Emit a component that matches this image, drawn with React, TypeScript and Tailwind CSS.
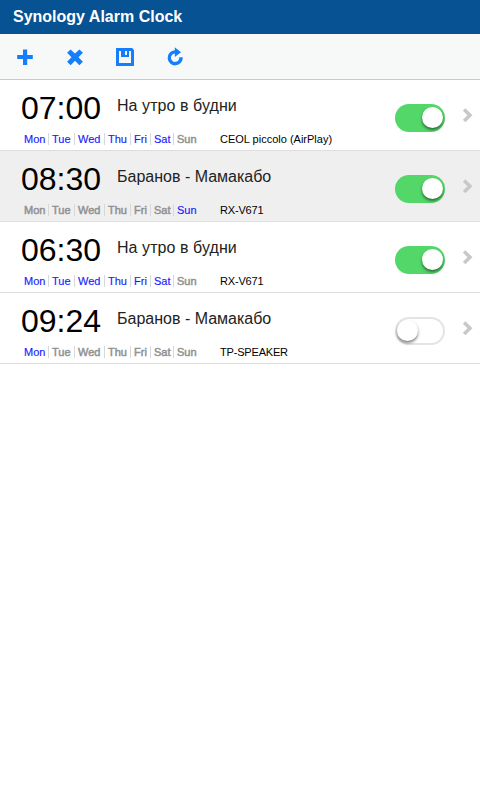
import React from "react";

type Alarm = {
  time: string;
  name: string;
  days: boolean[];
  device: string;
  enabled: boolean;
  selected?: boolean;
};

const DAYS = [
  { label: "Mon", width: "w-[27px]" },
  { label: "Tue", width: "w-[26px]" },
  { label: "Wed", width: "w-[30px]" },
  { label: "Thu", width: "w-[26px]" },
  { label: "Fri", width: "w-5" },
  { label: "Sat", width: "w-[23px]" },
  { label: "Sun", width: "w-[26px]" },
];

const ALARMS: Alarm[] = [
  { time: "07:00", name: "На утро в будни", days: [true, true, true, true, true, true, false], device: "CEOL piccolo (AirPlay)", enabled: true },
  { time: "08:30", name: "Баранов - Мамакабо", days: [false, false, false, false, false, false, true], device: "RX-V671", enabled: true, selected: true },
  { time: "06:30", name: "На утро в будни", days: [true, true, true, true, true, true, false], device: "RX-V671", enabled: true },
  { time: "09:24", name: "Баранов - Мамакабо", days: [true, false, false, false, false, false, false], device: "TP-SPEAKER", enabled: false },
];

function ToolButton({ label, children }: { label: string; children: React.ReactNode }) {
  return (
    <button aria-label={label} className="flex h-[46px] w-[50px] items-center justify-center text-[#157efb]">
      <svg width="20" height="20" viewBox="0 0 20 20" fill="currentColor">
        {children}
      </svg>
    </button>
  );
}

function Toggle({ on }: { on: boolean }) {
  return (
    <span
      className={
        "flex h-7 w-[50px] shrink-0 rounded-full " +
        (on ? "justify-end bg-[#53d769] pr-[2px] pt-[3px]" : "justify-start border-2 border-[#e4e4e4] bg-white pt-px")
      }
    >
      <span className="block size-[21px] rounded-full bg-white shadow-[0_2px_3px_rgba(0,0,0,0.5)]" />
    </span>
  );
}

function AlarmRow({ alarm }: { alarm: Alarm }) {
  return (
    <li className={"flex h-[71px] border-b border-[#dedede] " + (alarm.selected ? "bg-[#efefef]" : "bg-white")}>
      <div className="flex w-[395px] flex-col pl-[21px]">
        <div className="flex h-[53px]">
          <span className="w-24 pt-[10px] text-[32px] leading-9 text-black">{alarm.time}</span>
          <span
            className={
              "pt-4 text-[16px] leading-5 text-[#222222] " + (alarm.name.startsWith("На") ? "tracking-[0.07px]" : "")
            }
          >
            {alarm.name}
          </span>
        </div>
        <div className="flex h-3 text-[11px] leading-3">
          <div className="flex w-[199px]">
            {DAYS.map((day, i) => (
              <span
                key={day.label}
                className={
                  "h-3 border-[#d8d8d8] pl-[3px] " +
                  day.width +
                  (i === 0 ? " " : " border-l ") +
                  (alarm.days[i]
                    ? "text-[#1a1aff] [-webkit-text-stroke:0.15px_currentColor]"
                    : "text-[#929292] [-webkit-text-stroke:0.5px_currentColor]")
                }
              >
                {day.label}
              </span>
            ))}
          </div>
          <span className={"text-black " + (alarm.device.startsWith("CEOL") ? "" : "tracking-[-0.18px]")}>
            {alarm.device}
          </span>
        </div>
      </div>
      <div className="pt-6">
        <Toggle on={alarm.enabled} />
      </div>
      <svg className="ml-[17px] mt-7" width="12" height="15" viewBox="0 0 12 15" fill="none" stroke="#c8c8c8" strokeWidth="3.5">
        <path d="M2.1 1.4 L8 7.2 L2.1 13" />
      </svg>
    </li>
  );
}

export default function App() {
  return (
    <div className="min-h-screen w-full bg-white font-['Liberation_Sans',Arial,sans-serif]">
      <header className="flex h-[34px] items-center bg-[#075293] pl-[13px] text-[16px] font-bold leading-5 text-white">
        Synology Alarm Clock
      </header>
      <nav className="flex h-[46px] border-b border-[#c8c8c8] bg-[#f7f9f9]">
        <ToolButton label="Add">
          <path d="M8 2.5h4.2v5.6h5.6v4h-5.6v5.8H8v-5.8H2.2v-4H8z" />
        </ToolButton>
        <ToolButton label="Delete">
          <path d="M5.6 2.4 10 6.6l4.4-4.2 3.5 3.4-4.4 4.5 4.4 4.4-3.5 3.5-4.4-4.4-4.4 4.4-3.5-3.5 4.4-4.4-4.4-4.5z" />
        </ToolButton>
        <ToolButton label="Save">
          <path fillRule="evenodd" d="M1 1h16.2L19 3v16H1zM4 4v12h12V4h-2v6H6V4zM10 4v4H12V4z" />
        </ToolButton>
        <ToolButton label="Refresh">
          <path d="M9.8 3.2V0.3L16 5.2 9.8 10V6.5A4.2 4.2 0 1 0 14.3 10.3H17.8A7.6 7.6 0 1 1 9.8 3.2z" />
        </ToolButton>
      </nav>
      <ul>
        {ALARMS.map((alarm) => (
          <AlarmRow key={alarm.time} alarm={alarm} />
        ))}
      </ul>
    </div>
  );
}
